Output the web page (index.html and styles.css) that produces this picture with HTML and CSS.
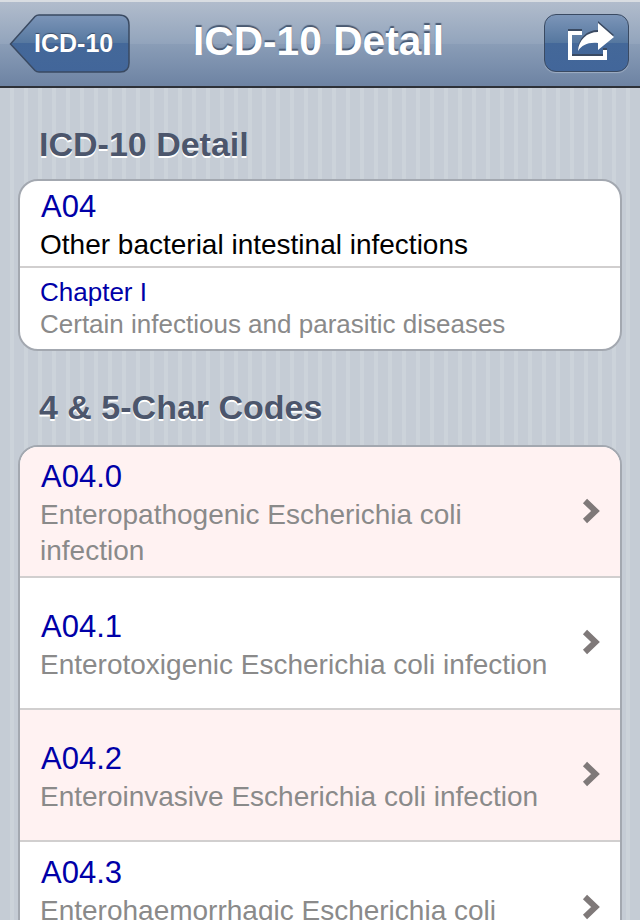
FILE: index.html
```html
<!DOCTYPE html>
<html lang="en">
<head>
<meta charset="utf-8">
<title>ICD-10 Detail</title>
<link rel="stylesheet" href="styles.css">
</head>
<body>
<div class="screen">
  <header class="nav">
    <a class="back">
      <svg class="back-shape" viewBox="0 0 122 60" width="122" height="60" aria-hidden="true">
        <defs>
          <linearGradient id="btn" x1="0" y1="0" x2="0" y2="1">
            <stop offset="0" stop-color="#7c95b8"/>
            <stop offset="0.5" stop-color="#55779f"/>
            <stop offset="0.5" stop-color="#446899"/>
            <stop offset="1" stop-color="#42669a"/>
          </linearGradient>
        </defs>
        <path d="M1.500 30 L26 2.500 Q27.500 1 30 1 H110 Q120 1 120 11 V49 Q120 58 111 58 H30 Q27.500 58 26 56.500 Z" fill="url(#btn)" stroke="#3a4a62" stroke-width="1.500"/>
      </svg>
      <span class="back-label">ICD-10</span>
    </a>
    <h1 class="nav-title">ICD-10 Detail</h1>
    <a class="action">
      <svg class="share" viewBox="0 0 85 58" width="85" height="58" aria-hidden="true">
        <path d="M24 17 H38 V21 H28 V42 H59 V36 H63 V46 H24 Z" fill="#fff"/>
        <path d="M34 37 C34.500 26 43 18 54 18 V9 L70 23 L54 36 V29 C44 28 38 31 34 37 Z" fill="#fff"/>
      </svg>
    </a>
  </header>
  <main class="content">
    <h2 class="section">ICD-10 Detail</h2>
    <section class="group">
      <div class="row head-row">
        <div class="code">A04</div>
        <div class="name">Other bacterial intestinal infections</div>
      </div>
      <div class="row chapter-row">
        <div class="chapter">Chapter I</div>
        <div class="chapter-name">Certain infectious and parasitic diseases</div>
      </div>
    </section>
    <h2 class="section second">4 &amp; 5-Char Codes</h2>
    <section class="group codes">
      <div class="row item pink tall">
        <div class="item-text">
          <div class="code code-item">A04.0</div>
          <div class="desc">Enteropathogenic Escherichia coli infection</div>
        </div>
        <svg class="chev" viewBox="0 0 20 28" width="20" height="28"><path d="M4 4 L14.500 14 L4 24" fill="none" stroke="#7f7979" stroke-width="6"/></svg>
      </div>
      <div class="row item white">
        <div class="item-text">
          <div class="code code-item">A04.1</div>
          <div class="desc">Enterotoxigenic Escherichia coli infection</div>
        </div>
        <svg class="chev" viewBox="0 0 20 28" width="20" height="28"><path d="M4 4 L14.500 14 L4 24" fill="none" stroke="#7f7979" stroke-width="6"/></svg>
      </div>
      <div class="row item pink">
        <div class="item-text">
          <div class="code code-item">A04.2</div>
          <div class="desc">Enteroinvasive Escherichia coli infection</div>
        </div>
        <svg class="chev" viewBox="0 0 20 28" width="20" height="28"><path d="M4 4 L14.500 14 L4 24" fill="none" stroke="#7f7979" stroke-width="6"/></svg>
      </div>
      <div class="row item white tall">
        <div class="item-text">
          <div class="code code-item">A04.3</div>
          <div class="desc">Enterohaemorrhagic Escherichia coli infection</div>
        </div>
        <svg class="chev" viewBox="0 0 20 28" width="20" height="28"><path d="M4 4 L14.500 14 L4 24" fill="none" stroke="#7f7979" stroke-width="6"/></svg>
      </div>
    </section>
  </main>
</div>
</body>
</html>
```
FILE: styles.css
```css
* { box-sizing: border-box; }
html, body { margin: 0; padding: 0; }
body { font-family: "Liberation Sans", Arial, sans-serif; }
.screen { width: 640px; height: 920px; overflow: hidden; display: flex; flex-direction: column; background: #c5ccd5; }
.nav {
  height: 88px; flex: none; position: relative; display: flex; align-items: flex-start; justify-content: space-between;
  padding: 14px 11px 0 9px;
  border-top: 2px solid #d9dde2; border-bottom: 2px solid #2d3138;
  background: linear-gradient(#b1bccc 0, #92a4bc 50%, #8a9db7 50%, #6d83a3 100%);
}
.back { position: relative; width: 122px; height: 60px; display: block; flex: none; margin-top: -2px; }
.back-shape { display: block; }
.back-label { position: absolute; left: 25px; top: 14px; font-size: 25px; line-height: 30px; font-weight: 700; color: #fff; text-shadow: 0 -1px 1px #3a4a62; }
.nav-title { position: absolute; left: -3px; right: 0; top: 16px; margin: 0; text-align: center; font-size: 40.700px; line-height: 46px; font-weight: 700; color: #fff; text-shadow: 0 -2px 1px #4a5a72; }
.action {
  width: 85px; height: 58px; margin-top: -2px; display: block; flex: none;
  border: 1.500px solid #3a4a62; border-radius: 12px;
  box-shadow: 0 1px 1px rgba(255,255,255,.3);
  background: linear-gradient(#7c95b8 0, #55779f 50%, #446899 50%, #42669a 100%);
}
.share { display: block; margin: -1.500px; filter: drop-shadow(0 -2px 0 #3a4a62); }
.content {
  flex: 1; padding: 0 18px;
  background: repeating-linear-gradient(90deg, #c5ccd5 0, #c5ccd5 10px, #ccd3da 10px, #ccd3da 14px);
}
.section { margin: 0; height: 91px; padding: 36px 0 0 21px; font-size: 34px; line-height: 40px; font-weight: 700; color: #4c566c; text-shadow: 0 2px 0 #fff; }
.second { height: 94px; padding-top: 36px; }
.group { border: 2px solid #a3a8b0; border-radius: 20px; overflow: hidden; background: #fff; }
.row { border-bottom: 2px solid #d1cfcf; padding-left: 20px; }
.row:last-child { border-bottom: none; }
.head-row { height: 87px; padding-top: 8px; }
.chapter-row { height: 81px; padding-top: 8px; }
.code { font-size: 31px; line-height: 36px; color: #0000a8; padding-left: 1px; }
.code-item { margin-bottom: 2px; padding-top: 1px; }
.name { font-size: 28px; line-height: 40px; color: #000; }
.chapter { font-size: 26px; line-height: 32px; color: #0000a8; }
.chapter-name { font-size: 26px; line-height: 32px; color: #8a8a8a; }
.item { display: flex; align-items: center; height: 132px; padding-right: 19px; }
.item.tall { height: 131px; }
.pink { background: #fff2f2; }
.white { background: #fff; }
.item-text { flex: 1; min-width: 0; padding-top: 4px; }
.desc { font-size: 28px; line-height: 36px; color: #8a8a8a; }
.chev { flex: none; margin: -2px 0 0 15px; }
```
